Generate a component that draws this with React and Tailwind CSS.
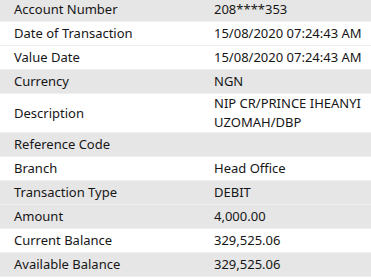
import React from "react";

const rows = [
  { label: "Account Number", value: "208****353", gray: true },
  { label: "Date of Transaction", value: "15/08/2020 07:24:43 AM", gray: false },
  { label: "Value Date", value: "15/08/2020 07:24:43 AM", gray: false },
  { label: "Currency", value: "NGN", gray: true },
  { label: "Description", value: ["NIP CR/PRINCE IHEANYI", "UZOMAH/DBP"], gray: false },
  { label: "Reference Code", value: "", gray: true },
  { label: "Branch", value: "Head Office", gray: false },
  { label: "Transaction Type", value: "DEBIT", gray: true },
  { label: "Amount", value: "4,000.00", gray: true },
  { label: "Current Balance", value: "329,525.06", gray: false },
  { label: "Available Balance", value: "329,525.06", gray: true },
];

export default function App() {
  return (
    <div
      className="w-[371px] h-[278px] overflow-hidden bg-white text-[#161616] text-[13px] leading-[17px]"
      style={{ fontFamily: '"Noto Sans", "Open Sans", sans-serif' }}
    >
      <div className="-mt-[2px] flex flex-col">
        {rows.map((r, i) => (
          <div
            key={i}
            className={
              "grid grid-cols-[214px_1fr] items-center border-b border-[#f0f0f0] " +
              (r.gray ? "bg-[#e6e6e6]" : "bg-white")
            }
          >
            <div className="pl-[14px] py-[3px]">{r.label}</div>
            {Array.isArray(r.value) ? (
              <div className="leading-[19px]">
                {r.value.map((v, j) => (
                  <div key={j}>{v}</div>
                ))}
              </div>
            ) : (
              <div className="py-[3px] min-h-[23px]">{r.value}</div>
            )}
          </div>
        ))}
      </div>
    </div>
  );
}
